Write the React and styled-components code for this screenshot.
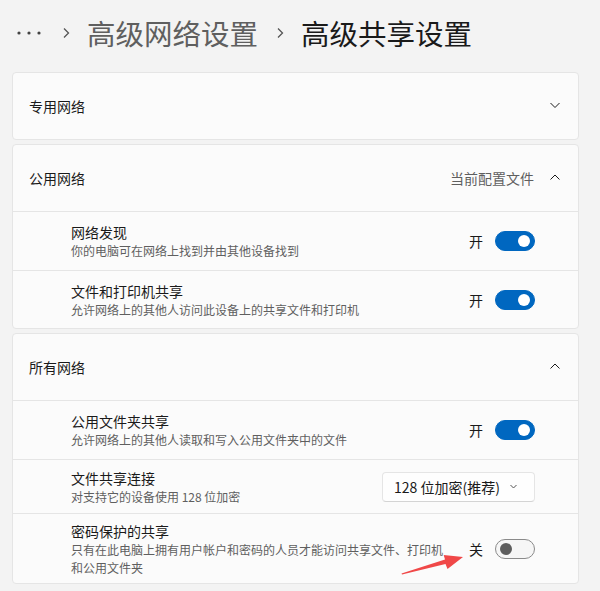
import styled, { createGlobalStyle } from "styled-components";

const GlobalStyle = createGlobalStyle`
  body {
    margin: 0;
    background: #f3f3f3;
    font-family: "Noto Sans CJK SC", "Noto Sans", sans-serif;
    color: #1a1a1a;
  }
`;

const Page = styled.div`
  position: relative;
  width: 600px;
  height: 591px;
  box-sizing: border-box;
  padding: 13px 21px 0 12px;
  overflow: hidden;
`;

const Breadcrumb = styled.div`
  display: flex;
  align-items: center;
  height: 40px;
  margin-bottom: 19px;
`;

const Dots = styled.svg`
  margin-left: 5px;
  margin-right: 21px;
`;

const Sep = styled.svg`
  margin: 0 17px 0 0;
`;

const Crumb = styled.span`
  font-size: 28.5px;
  line-height: 40px;
  color: ${(p) => (p.$current ? "#1a1a1a" : "#5f5f5f")};
  margin-right: ${(p) => (p.$current ? 0 : 18)}px;
`;

const Stack = styled.div`
  display: flex;
  flex-direction: column;
  gap: 4px;
`;

const Card = styled.section`
  background: #fbfbfb;
  border: 1px solid #e5e5e5;
  border-radius: 4px;
`;

const CardHeader = styled.div`
  display: flex;
  align-items: center;
  height: 66px;
  padding: 0 18px 1px 16px;
  box-sizing: border-box;
  font-size: 14px;
`;

const HeaderTitle = styled.span`
  flex: 1;
`;

const HeaderNote = styled.span`
  color: #5f5f5f;
  margin-right: 16px;
`;

const Row = styled.div`
  display: flex;
  align-items: center;
  height: ${(p) => p.$h}px;
  box-sizing: content-box;
  border-top: 1px solid #e5e5e5;
  padding: 0 43px 0 58px;
`;

const Texts = styled.div`
  flex: 1;
  display: flex;
  flex-direction: column;
  padding-top: 1px;
`;

const Title = styled.div`
  font-size: 14px;
  line-height: 19px;
`;

const Sub = styled.div`
  font-size: 12px;
  line-height: 18px;
  color: #5f5f5f;
  max-width: 380px;
`;

const State = styled.span`
  font-size: 14px;
  margin-right: 12px;
`;

const Toggle = styled.div`
  width: 40px;
  height: 20px;
  box-sizing: border-box;
  border-radius: 10px;
  display: flex;
  align-items: center;
  justify-content: ${(p) => (p.$on ? "flex-end" : "flex-start")};
  padding: 0 4px;
  background: ${(p) => (p.$on ? "#0067c0" : "#f6f6f6")};
  border: 1px solid ${(p) => (p.$on ? "#0067c0" : "#8a8a8a")};

  &::after {
    content: "";
    width: 12px;
    height: 12px;
    border-radius: 50%;
    background: ${(p) => (p.$on ? "#ffffff" : "#5d5d5d")};
  }
`;

const Select = styled.div`
  width: 153px;
  height: 30px;
  box-sizing: border-box;
  display: flex;
  align-items: center;
  justify-content: space-between;
  padding: 0 17px 0 11px;
  background: #fefefe;
  border: 1px solid #e5e5e5;
  border-bottom-color: #d4d4d4;
  border-radius: 4px;
  font-size: 14px;
`;

const Overlay = styled.svg`
  position: absolute;
  left: 0;
  top: 0;
  pointer-events: none;
`;

const Chevron = ({ up, w = 10, h = 5, color = "#1a1a1a" }) => (
  <svg width={w} height={h + 2} viewBox={`0 0 ${w} ${h + 2}`}>
    <path
      d={up ? `M0.5 ${h + 0.5} L${w / 2} 1 L${w - 0.5} ${h + 0.5}` : `M0.5 1 L${w / 2} ${h + 0.5} L${w - 0.5} 1`}
      fill="none"
      stroke={color}
      strokeWidth="1"
    />
  </svg>
);

const Switch = ({ on }) => (
  <>
    <State>{on ? "开" : "关"}</State>
    <Toggle $on={on} />
  </>
);

const Setting = ({ title, sub, h, children }) => (
  <Row $h={h}>
    <Texts>
      <Title>{title}</Title>
      <Sub>{sub}</Sub>
    </Texts>
    {children}
  </Row>
);

export default function App() {
  return (
    <Page>
      <GlobalStyle />
      <Breadcrumb>
        <Dots width="24" height="4" viewBox="0 0 24 4">
          <circle cx="2" cy="2" r="1.6" fill="#444" />
          <circle cx="12" cy="2" r="1.6" fill="#444" />
          <circle cx="22" cy="2" r="1.6" fill="#444" />
        </Dots>
        <Sep width="8" height="12" viewBox="0 0 8 12">
          <path d="M2 1.5 L6.5 6 L2 10.5" fill="none" stroke="#555" strokeWidth="1.3" />
        </Sep>
        <Crumb>高级网络设置</Crumb>
        <Sep width="8" height="12" viewBox="0 0 8 12">
          <path d="M2 1.5 L6.5 6 L2 10.5" fill="none" stroke="#555" strokeWidth="1.3" />
        </Sep>
        <Crumb $current>高级共享设置</Crumb>
      </Breadcrumb>

      <Stack>
        <Card>
          <CardHeader>
            <HeaderTitle>专用网络</HeaderTitle>
            <Chevron />
          </CardHeader>
        </Card>

        <Card>
          <CardHeader>
            <HeaderTitle>公用网络</HeaderTitle>
            <HeaderNote>当前配置文件</HeaderNote>
            <Chevron up />
          </CardHeader>
          <Setting h={58} title="网络发现" sub="你的电脑可在网络上找到并由其他设备找到">
            <Switch on />
          </Setting>
          <Setting h={57} title="文件和打印机共享" sub="允许网络上的其他人访问此设备上的共享文件和打印机">
            <Switch on />
          </Setting>
        </Card>

        <Card>
          <CardHeader>
            <HeaderTitle>所有网络</HeaderTitle>
            <Chevron up />
          </CardHeader>
          <Setting h={58} title="公用文件夹共享" sub="允许网络上的其他人读取和写入公用文件夹中的文件">
            <Switch on />
          </Setting>
          <Setting h={53} title="文件共享连接" sub="对支持它的设备使用 128 位加密">
            <Select>
              <span>128 位加密(推荐)</span>
              <Chevron w={7} h={3.5} color="#555" />
            </Select>
          </Setting>
          <Setting
            h={69}
            title="密码保护的共享"
            sub="只有在此电脑上拥有用户帐户和密码的人员才能访问共享文件、打印机和公用文件夹"
          >
            <Switch on={false} />
          </Setting>
        </Card>
      </Stack>

      <Overlay width="600" height="591" viewBox="0 0 600 591">
        <polygon
          points="402,574.5 445.5,564 447.5,569 463,557 443.7,555 445,559.5 401.5,573.5"
          fill="#f04848"
        />
      </Overlay>
    </Page>
  );
}
